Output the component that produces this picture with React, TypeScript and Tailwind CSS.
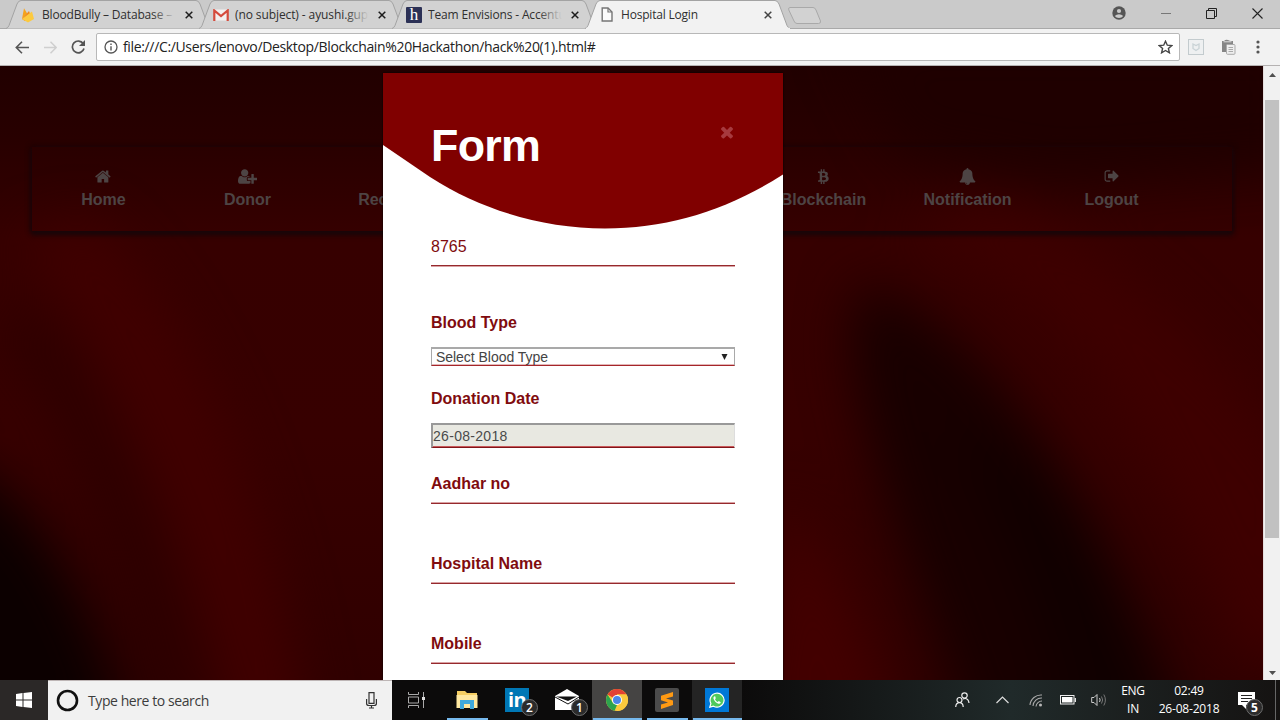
import type { ReactNode } from "react";

const ui = "font-['Open_Sans','Noto_Sans',sans-serif]";

/* ---------- Browser chrome ---------- */

function TabShape({ active }: { active?: boolean }) {
  return (
    <svg className="absolute inset-0" width="206" height="29" viewBox="0 0 206 29">
      <path
        d="M0 28.5 Q2 28 3 25.5 L11 4 Q12.5 0.5 15 0.5 H190 Q192.500 0.5 194 4 L202 25.5 Q203 28 205.500 28.500"
        fill={active ? "#f2f2f2" : "#d2d2d2"}
        stroke="#a3a3a3"
        strokeWidth="1"
      />
      {active && <path d="M1 28.500H205" stroke="#f2f2f2" strokeWidth="1.4" />}
    </svg>
  );
}

function Tab({
  icon,
  title,
  titleClass,
  active,
  fade,
}: {
  icon: ReactNode;
  title: string;
  titleClass: string;
  active?: boolean;
  fade?: boolean;
}) {
  return (
    <div className={`relative -mr-[13px] h-[29px] w-[206px] shrink-0 ${active ? "z-10" : ""}`}>
      <TabShape active={active} />
      <div className="relative flex h-[29px] items-center pl-[14px]">
        <div className="flex w-4 justify-center">{icon}</div>
        <div className={`relative ml-[6px] w-[134px] overflow-hidden whitespace-nowrap text-[12px] text-[#2f2f2f] ${titleClass}`}>
          {title}
          {fade && <div className="absolute inset-y-0 right-0 w-6 bg-linear-to-r from-[#d2d2d200] to-[#d2d2d2]" />}
        </div>
        <svg className="ml-[9px]" width="8" height="8" viewBox="0 0 8 8">
          <path d="M0.700 0.700L7.300 7.300M7.300 0.700L0.700 7.300" stroke={active ? "#444" : "#1c1c1c"} strokeWidth="1.500" />
        </svg>
      </div>
    </div>
  );
}

function FirebaseIcon() {
  return (
    <svg width="14" height="16" viewBox="0 0 14 16">
      <path d="M1 12L3 1.300L6.200 6.500Z" fill="#f5a31c" />
      <path d="M1 12L8 4L9.500 8L4 14Z" fill="#f08a1d" />
      <path d="M1 12L11 4.500L13 12L7 15.500Z" fill="#fcca3f" />
    </svg>
  );
}

function GmailIcon() {
  return (
    <svg width="16" height="12" viewBox="0 0 16 12">
      <rect x="1" y="0.500" width="14" height="11" fill="#f3f0ef" />
      <path d="M1.300 12V1.500L8 7L14.700 1.500V12" fill="none" stroke="#d54b3d" strokeWidth="2.200" />
    </svg>
  );
}

function PageIcon() {
  return (
    <svg width="12" height="15" viewBox="0 0 12 15">
      <path d="M1.200 1H7L11 5V14H1.200Z" fill="#fafafa" stroke="#757575" strokeWidth="1.400" />
      <path d="M7 1V5H11" fill="none" stroke="#757575" strokeWidth="1.200" />
    </svg>
  );
}

function TabStrip() {
  return (
    <div className="relative z-10 flex h-[29px] shrink-0 bg-[#cacaca] pl-[6px] shadow-[inset_0_-1px_0_#a9a9a9]">
      <Tab icon={<FirebaseIcon />} title="BloodBully – Database – F" titleClass="tracking-[-0.170px]" fade />
      <Tab icon={<GmailIcon />} title="(no subject) - ayushi.gupt" titleClass="tracking-[-0.100px]" fade />
      <Tab
        icon={
          <div className="flex h-4 w-4 items-center justify-center rounded-[1px] bg-[#2c3156] font-['Liberation_Serif',serif] text-[17px] leading-none text-white">
            h
          </div>
        }
        title="Team Envisions - Accentu"
        titleClass="tracking-[-0.150px]"
        fade
      />
      <Tab icon={<PageIcon />} title="Hospital Login" titleClass="tracking-[-0.200px]" active />
      <svg className="mt-[7px] ml-[9px]" width="36" height="18" viewBox="0 0 36 18">
        <path d="M3 0.500H26Q28 0.500 29 3L33.500 14Q34 16.500 31.500 16.500H10Q8 16.500 7 14L1.800 3Q1 0.500 3 0.500Z" fill="#d2d2d2" stroke="#a9a9a9" />
      </svg>
      <div className="ml-auto flex h-[27px] items-center pr-[17px]">
        <svg className="mt-[-2px]" width="14" height="14" viewBox="0 0 14 14">
          <circle cx="7" cy="7" r="6.700" fill="#555" />
          <circle cx="7" cy="5" r="2.100" fill="#cacaca" />
          <path d="M2.800 9.900Q4.500 8.200 7 8.200T11.200 9.900Q9.800 12 7 12T2.800 9.900Z" fill="#cacaca" />
        </svg>
        <svg className="ml-[35px]" width="10" height="10" viewBox="0 0 10 10">
          <path d="M0 4.500H10" stroke="#777" />
        </svg>
        <svg className="ml-[35px]" width="11" height="11" viewBox="0 0 11 11">
          <path d="M0.500 2.500H8.500V10.500H0.500ZM2.500 2.500V0.500H10.500V8.500H8.500" fill="none" stroke="#222" />
        </svg>
        <svg className="ml-[35px]" width="11" height="11" viewBox="0 0 11 11">
          <path d="M0.500 0.500L10.500 10.500M10.500 0.500L0.500 10.500" stroke="#222" strokeWidth="1.100" />
        </svg>
      </div>
    </div>
  );
}

function Toolbar() {
  return (
    <div className="flex h-[37px] shrink-0 items-center border-b border-[#b5b2b2] bg-[#f2f2f2] pl-[15px]">
      <svg width="14" height="13" viewBox="0 0 14 13">
        <path d="M14 6.500H1.500M7 0.800L1.300 6.500L7 12.200" fill="none" stroke="#555" strokeWidth="1.600" />
      </svg>
      <svg className="ml-[15px]" width="13" height="13" viewBox="0 0 13 13">
        <path d="M0 6.500H12M6.500 0.800L12.200 6.500L6.500 12.200" fill="none" stroke="#cfcfcf" strokeWidth="1.500" />
      </svg>
      <svg className="ml-[14px]" width="15" height="14" viewBox="0 0 15 14">
        <path d="M12.200 3.600A5.900 5.900 0 1 0 13 8.500" fill="none" stroke="#555" strokeWidth="1.700" />
        <path d="M14 0V6H8Z" fill="#555" />
      </svg>
      <div className="ml-[10px] flex h-[28px] w-[1084px] items-center rounded-[2px] border border-[#b8b8b8] bg-white pl-[7px]">
        <svg width="14" height="14" viewBox="0 0 14 14">
          <circle cx="7" cy="7" r="6" fill="none" stroke="#555" strokeWidth="1.300" />
          <path d="M7 6.200V10.500M7 3.500V5" stroke="#555" strokeWidth="1.400" />
        </svg>
        <div className="ml-[5px] flex-1 text-[14px] leading-[20px] tracking-[-0.350px] whitespace-nowrap text-[#222]">
          file:///C:/Users/lenovo/Desktop/Blockchain%20Hackathon/hack%20(1).html#
        </div>
        <svg className="mr-[6px]" width="15" height="14" viewBox="0 0 15 14">
          <path d="M7.500 1.200L9.300 5.200L13.700 5.600L10.400 8.500L11.400 12.800L7.500 10.500L3.600 12.800L4.600 8.500L1.300 5.600L5.700 5.200Z" fill="none" stroke="#444" strokeWidth="1.400" />
        </svg>
      </div>
      <svg className="ml-[8px]" width="16" height="16" viewBox="0 0 16 16">
        <rect x="0.500" y="0.500" width="15" height="15" fill="#eef0f1" stroke="#c3cbce" />
        <path d="M5 5L8 6.500L11 5V9.500L8 11.500L5 9.500Z" fill="none" stroke="#c9d3d6" strokeWidth="1.300" />
      </svg>
      <svg className="ml-[17px]" width="15" height="16" viewBox="0 0 15 16">
        <path d="M1 2H3Q5 0 7 1T10 2H12V6H6V13H1Z" fill="#858585" />
        <path d="M2.500 2.800H10.500" stroke="#ddd" />
        <rect x="5.500" y="5.500" width="8.500" height="9.800" rx="1" fill="#eee" stroke="#aaa" />
        <path d="M7.500 8.500H12M7.500 10.500H12M7.500 12.500H12" stroke="#aaa" />
      </svg>
      <svg className="ml-[20px]" width="4" height="14" viewBox="0 0 4 14">
        <circle cx="2" cy="2" r="1.600" fill="#555" />
        <circle cx="2" cy="7" r="1.600" fill="#555" />
        <circle cx="2" cy="12" r="1.600" fill="#555" />
      </svg>
    </div>
  );
}

/* ---------- Page ---------- */

const iconPaths = {
  home: "M1408 992v480q0 26-19 45t-45 19h-384v-384h-256v384h-384q-26 0-45-19t-19-45v-480q0-1 .5-3t.5-3l575-474 575 474q1 2 1 6zm223-69l-62 74q-8 9-21 11h-3q-13 0-21-7l-692-577-692 577q-12 8-24 7-13-2-21-11l-62-74q-8-10-7-23.5t11-21.5l719-599q32-26 76-26t76 26l244 204v-195q0-14 9-23t23-9h192q14 0 23 9t9 23v408l219 182q10 8 11 21.5t-7 23.5z",
  userPlus:
    "M704 896q-159 0-271.5-112.5t-112.5-271.5 112.5-271.5 271.5-112.5 271.5 112.5 112.5 271.5-112.5 271.5-271.5 112.5zm960 128h352q13 0 22.5 9.5t9.5 22.5v192q0 13-9.5 22.5t-22.5 9.5h-352v352q0 13-9.5 22.5t-22.5 9.5h-192q-13 0-22.5-9.5t-9.5-22.5v-352h-352q-13 0-22.5-9.5t-9.5-22.5v-192q0-13 9.5-22.5t22.5-9.5h352v-352q0-13 9.5-22.5t22.5-9.5h192q13 0 22.5 9.5t9.5 22.5v352zm-736 224q0 52 38 90t90 38h256v238q-68 50-171 50h-874q-121 0-194-69t-73-190q0-53 3.5-103.5t14-109 26.5-108.5 43-97.5 62-81 85.5-53.5 111.5-20q19 0 39 17 79 61 154.5 91.5t164.5 30.5 164.5-30.5 154.5-91.5q20-17 39-17 132 0 217 96h-223q-52 0-90 38t-38 90v192z",
  btc: "M1217 651q18 182-131 258 117 28 175 103t45 214q-7 71-32.5 125t-64.5 89-97 58.5-121.5 34.5-145.5 15v255h-154v-251q-80 0-122-1v252h-154v-255q-18 0-54-.5t-55-.5h-200l31-183h111q50 0 58-51v-402h16q-6-1-16-1v-287q-13-68-89-68h-111v-164l212 1q64 0 97-1v-252h154v247q82-2 122-2v-245h154v252q79 7 140 22.5t113 45 82.5 78 36.5 114.5zm-215 545q0-36-15-64t-37-46-57.5-30.5-65.5-18.5-74-9-69-3-64.5 1-47.5 1v338q8 0 37 .5t48 .5 53-1.5 58.5-4 57-8.5 55.5-14 47.5-21 39.5-30 24.5-40 9.5-51zm-71-476q0-33-12.5-58.5t-30.5-42-48-28-55-16.5-61.5-8-58-2.5-54 1-39.5.5v307q5 0 34.500.5t46.500 0 50-2 55-5.500 51.500-11 48.500-18.500 37-27 27-38.500 9-51z",
  bell: "M912 1696q0-16-16-16-59 0-101.5-42.5t-42.5-101.5q0-16-16-16t-16 16q0 73 51.5 124.5t124.5 51.5q16 0 16-16zm816-288q0 52-38 90t-90 38h-448q0 106-75 181t-181 75-181-75-75-181h-448q-52 0-90-38t-38-90q50-42 91-88t85-119.5 74.5-158.5 50-206 19.5-260q0-152 117-282.5t307-158.5q-8-19-8-39 0-40 28-68t68-28 68 28 28 68q0 20-8 39 190 28 307 158.5t117 282.5q0 139 19.5 260t50 206 74.5 158.5 85 119.5 91 88z",
  signOut:
    "M704 1440q0 4 1 20t.5 26.5-3 23.5-10 19.5-20.5 6.5h-320q-119 0-203.5-84.5t-84.5-203.5v-704q0-119 84.5-203.5t203.5-84.5h320q13 0 22.5 9.5t9.5 22.5q0 4 1 20t.5 26.5-3 23.5-10 19.5-20.5 6.5h-320q-66 0-113 47t-47 113v704q0 66 47 113t113 47h312l11.5 1 11.5 3 8 5.5 7 9 2 13.5zm928-544q0 26-19 45l-544 544q-19 19-45 19t-45-19-19-45v-288h-448q-26 0-45-19t-19-45v-384q0-26 19-45t45-19h448v-288q0-26 19-45t45-19 45 19l544 544q19 19 19 45z",
  times:
    "M1490 1322q0 40-28 68l-136 136q-28 28-68 28t-68-28l-294-294-294 294q-28 28-68 28t-68-28l-136-136q-28-28-28-68t28-68l294-294-294-294q-28-28-28-68t28-68l136-136q28-28 68-28t68 28l294 294 294-294q28-28 68-28t68 28l136 136q28 28 28 68t-28 68l-294 294 294 294q28 28 28 68z",
};

function Glyph({ d, size, width = 1792 }: { d: string; size: number; width?: number }) {
  return (
    <svg width={(size * width) / 1792} height={size} viewBox={`0 0 ${width} 1792`} fill="currentColor">
      <path d={d} />
    </svg>
  );
}

function NavItem({ icon, label }: { icon?: ReactNode; label?: string }) {
  return (
    <div className="flex w-[144px] shrink-0 flex-col items-center pt-[21px] text-[16px] leading-[20px] font-bold whitespace-nowrap">
      <div className="flex h-4 items-center">{icon}</div>
      <div className="mt-[6px]">{label}</div>
    </div>
  );
}

function Backdrop() {
  return (
    <svg className="absolute inset-0" width="1263" height="614" viewBox="0 66 1263 614" preserveAspectRatio="none">
      <defs>
        <linearGradient id="base" x1="0" y1="0" x2="0" y2="1">
          <stop offset="0" stopColor="#210000" />
          <stop offset="0.120" stopColor="#280000" />
          <stop offset="0.280" stopColor="#360000" />
          <stop offset="0.600" stopColor="#370000" />
          <stop offset="1" stopColor="#300000" />
        </linearGradient>
        <filter id="soft" x="-50%" y="-50%" width="200%" height="200%" colorInterpolationFilters="sRGB">
          <feGaussianBlur stdDeviation="26" />
        </filter>
      </defs>
      <rect y="66" width="1263" height="614" fill="url(#base)" />
      <g filter="url(#soft)">
        <path d="M-60 450C30 490 90 590 130 740H-80Z" fill="#0c0000" />
        <path d="M20 240C70 300 180 480 230 740H310C270 500 200 320 90 220Z" fill="#400000" />
        <path d="M0 330C60 380 130 540 165 720H205C170 540 100 380 30 310Z" fill="#2a0000" />
        <path d="M840 30H1300V160L1060 180L900 150Z" fill="#1f0000" />
        <path d="M860 280C960 320 1080 430 1190 740H970C930 600 870 500 850 340Z" fill="#180000" />
        <path d="M960 430C1030 440 1120 560 1170 740H1070C1050 620 1000 520 960 430Z" fill="#100000" />
        <path d="M900 230C1020 260 1130 360 1240 660H1310V480C1200 330 1100 230 980 205Z" fill="#3e0000" />
        <path d="M783 500C830 550 870 620 900 740H750Z" fill="#430000" />
      </g>
    </svg>
  );
}

function Field({ label }: { label: string }) {
  return (
    <div className="mb-[40px] h-[40px] border-b border-[#96292d] pt-[10px] leading-[20px] font-bold shadow-[inset_0_-1px_0_#d9a2a4]">
      {label}
    </div>
  );
}

function FormModal() {
  return (
    <div className="absolute top-[7px] left-[383px] h-[607px] w-[400px] overflow-hidden bg-white px-[48px] font-['Liberation_Sans',Arial,sans-serif] text-[16px] text-[#800b0e] shadow-[0_0_2px_#000]">
      <svg className="absolute top-0 left-0" width="400" height="156" viewBox="0 0 400 156">
        <path d="M0 0H400V101.500C345 137 285 155.500 222 155.500C160 155.500 98 137 47 104L0 72Z" fill="#800000" />
      </svg>
      <div className="relative flex h-[163px] items-start justify-between">
        <h1 className="mt-[45px] text-[44.8px] leading-[54px] font-bold tracking-[-0.700px] text-white">Form</h1>
        <div className="mt-[50px] -mr-[1px] text-[#a63a3e]">
          <Glyph d={iconPaths.times} size={18} />
        </div>
      </div>
      <div className="h-[31px] border-b border-[#d9a2a4] leading-[22px] shadow-[inset_0_-1px_0_#96292d]">8765</div>
      <div className="mt-[46px] leading-[20px] font-bold">Blood Type</div>
      <div className="mt-[14px] flex h-[19px] items-center justify-between border border-t-2 border-[#a9a9a9] border-b-[#a5262a] pr-[6px] pl-[4px] text-[14px] text-[#444] shadow-[inset_0_-1px_0_#e3b6b7]">
        <span className="-mt-[1px] leading-[16px] tracking-[-0.040px]">Select Blood Type</span>
        <svg width="7" height="6" viewBox="0 0 7 6">
          <path d="M0.500 0H6.500L3.500 6Z" fill="#222" />
        </svg>
      </div>
      <div className="mt-[23px] leading-[20px] font-bold">Donation Date</div>
      <div className="mt-[14px] h-[25px] border-t-2 border-r border-b border-l-2 border-t-[#999] border-r-[#ddd] border-b-[#801418] border-l-[#999] bg-[#e8e8e1] text-[14px] leading-[22px] tracking-[0.300px] text-[#4a4a4a] shadow-[inset_0_-1px_0_#c9585a]">
        26-08-2018
      </div>
      <div className="mt-[16px]">
        <Field label="Aadhar no" />
        <Field label="Hospital Name" />
        <Field label="Mobile" />
      </div>
    </div>
  );
}

function Page() {
  return (
    <div className="flex h-[614px] shrink-0">
      <div className="relative h-[614px] w-[1263px] overflow-hidden">
        <Backdrop />
        <div className="relative mt-[81px] ml-[31.5px] flex h-[84px] w-[1200px] font-['Liberation_Sans',Arial,sans-serif] text-[#4d4444] shadow-[0_3px_5px_1px_#180609,0_0_5px_1px_#1c0407]">
          <NavItem icon={<Glyph d={iconPaths.home} size={17} />} label="Home" />
          <NavItem icon={<Glyph d={iconPaths.userPlus} size={17} width={2048} />} label="Donor" />
          <NavItem label="Receiver" />
          <NavItem />
          <NavItem />
          <NavItem icon={<Glyph d={iconPaths.btc} size={16} width={1536} />} label="Blockchain" />
          <NavItem icon={<Glyph d={iconPaths.bell} size={17} />} label="Notification" />
          <NavItem icon={<Glyph d={iconPaths.signOut} size={16} />} label="Logout" />
        </div>
        <FormModal />
      </div>
      <div className="flex w-[17px] flex-col items-center border-l border-[#e4dede] bg-[#f1f1f1]">
        <svg className="mt-[7px]" width="7" height="4" viewBox="0 0 7 4">
          <path d="M0 4L3.500 0L7 4Z" fill="#505050" />
        </svg>
        <div className="mt-[23px] h-[438px] w-[14px] bg-[#c1c1c1]" />
        <svg className="mt-auto mb-[5px]" width="7" height="4" viewBox="0 0 7 4">
          <path d="M0 0L3.500 4L7 0Z" fill="#505050" />
        </svg>
      </div>
    </div>
  );
}

/* ---------- Taskbar ---------- */

function Badge({ children }: { children: ReactNode }) {
  return (
    <div className="absolute top-[19px] left-[29px] flex h-[17px] w-[17px] items-center justify-center rounded-full border border-[#6c6c6c] bg-[#2b2b2b] text-[12px] leading-none font-semibold text-white">
      {children}
    </div>
  );
}

function TaskButton({ children, className = "", bar = "" }: { children: ReactNode; className?: string; bar?: string }) {
  return (
    <div className={`relative flex h-10 w-[50px] shrink-0 items-center justify-center ${className}`}>
      {children}
      {bar && <div className={`absolute bottom-0 h-[2px] bg-[#76b9ed] ${bar}`} />}
    </div>
  );
}

function Taskbar() {
  return (
    <div className="flex h-10 shrink-0 bg-[#0c0b0b] text-white">
      <div className="flex w-12 shrink-0 items-center justify-center bg-[#2b2827]">
        <svg width="16" height="16" viewBox="0 0 16 16" fill="#fff">
          <path d="M0 2L6.500 1.100V7.500H0ZM7.500 1L16 0V7.500H7.500ZM0 8.500H6.500V14.900L0 14ZM7.500 8.500H16V16L7.500 15Z" />
        </svg>
      </div>
      <div className="flex w-[344px] shrink-0 items-center border-t border-[#bdb5b5] bg-[#f1f1f1] pl-[8px]">
        <svg width="23" height="23" viewBox="0 0 23 23">
          <circle cx="11.500" cy="11.500" r="9.500" fill="none" stroke="#111" strokeWidth="2.600" />
        </svg>
        <div className="ml-[9px] text-[14px] tracking-[-0.420px] text-[#3c3c3c]">Type here to search</div>
        <svg className="mr-[15px] ml-auto" width="11" height="17" viewBox="0 0 11 17">
          <path d="M3 0.700H8V11.300H3ZM0.600 7V11.500Q0.600 13.500 3 13.500H8Q10.400 13.500 10.400 11.500V7M5.500 13.500V16M3 16H8" fill="none" stroke="#333" strokeWidth="1.200" />
        </svg>
      </div>
      <TaskButton>
        <svg className="-ml-[1px]" width="17" height="16" viewBox="0 0 17 16">
          <path d="M0.500 0V2.500H10.500V0M0.500 16V13.500H10.500V16M0.500 5H10.500V11H0.500ZM15.500 0V16" fill="none" stroke="#aaa" />
          <path d="M14 5H17V8H14Z" fill="#ddd" />
        </svg>
      </TaskButton>
      <TaskButton bar="left-[5px] w-[41px]">
        <svg width="22" height="18" viewBox="0 0 22 18">
          <path d="M1 0H9L11 2H21V16H1Z" fill="#f5ce63" />
          <path d="M0.500 4H21.500V17H0.500Z" fill="#ffe8a0" />
          <path d="M4 18V9H18V18H14V13H8V18Z" fill="#3fa9dc" />
        </svg>
      </TaskButton>
      <TaskButton>
        <div className="flex h-6 w-6 items-center justify-center bg-[#0077b5] font-['Open_Sans',sans-serif] text-[20px] leading-none font-bold tracking-[-0.500px]">
          in
        </div>
        <Badge>2</Badge>
      </TaskButton>
      <TaskButton>
        <svg width="24" height="22" viewBox="0 0 24 22">
          <path d="M0 7L12 0L24 7V21H0Z" fill="#fff" />
          <path d="M1 7.500H22L13 12Z" fill="#111" />
          <path d="M0 8L13 15L24 8" fill="none" stroke="#111" strokeWidth="1" />
        </svg>
        <Badge>1</Badge>
      </TaskButton>
      <TaskButton className="bg-[#454443]" bar="left-[1px] w-[49px]">
        <svg width="22" height="22" viewBox="0 0 22 22">
          <circle cx="11" cy="11" r="11" fill="#fbc93d" />
          <path d="M11 11L1.500 5.500A11 11 0 0 1 20.500 5.500H11Z" fill="#e34133" />
          <path d="M1.500 5.500L6.700 13.500L11 16L8.600 21.700A11 11 0 0 1 1.500 5.500Z" fill="#2da44e" />
          <path d="M20.500 5.500H11V11L15.300 13.500L10.500 22A11 11 0 0 0 20.500 5.500Z" fill="#fbc93d" />
          <circle cx="11" cy="11" r="5" fill="#fff" />
          <circle cx="11" cy="11" r="4" fill="#4a86e8" />
        </svg>
      </TaskButton>
      <TaskButton bar="left-[5px] w-[41px]">
        <div className="flex h-6 w-6 items-center justify-center rounded-[2px] bg-[#4b4b4b]">
          <svg width="14" height="17" viewBox="0 0 14 17">
            <path d="M13 0V4.500L6 6.500L13 8.500V13L1 17V12.500L8 10.400L1 8.200V3.800Z" fill="#ff9a13" />
          </svg>
        </div>
      </TaskButton>
      <TaskButton className="bg-[#242424]" bar="left-[1px] w-[49px]">
        <div className="flex h-6 w-6 items-center justify-center bg-[#0078d7]">
          <svg width="16" height="16" viewBox="0 0 16 16">
            <path d="M0.800 15.200L1.900 11.500A7 7 0 1 1 4.500 14.200Z" fill="#4fca5c" stroke="#fff" strokeWidth="1.200" />
            <path d="M5.500 4.200Q4 5 4.500 6.800Q6 10.800 9.500 11.700Q11.200 12 11.800 10.200L9.800 9L8.700 10Q6.800 9.200 6 7.300L6.800 6.300L6.200 4.200Z" fill="#fff" />
          </svg>
        </div>
      </TaskButton>
      <div className="flex flex-1 items-center bg-linear-to-r from-[#0c0b0b] via-[#202a2a] to-[#151312] pl-[213px]">
        <svg className="shrink-0" width="15" height="16" viewBox="0 0 15 16" fill="none" stroke="#eee" strokeWidth="1.200">
          <circle cx="9.500" cy="3.500" r="2.700" />
          <circle cx="4.500" cy="8" r="2.500" />
          <path d="M0.700 15Q1 10.700 4.500 10.700T8.200 15M8 7Q9 6.400 10.500 6.500Q13.500 7 14 11" />
        </svg>
        <svg className="ml-[26px]" width="13" height="8" viewBox="0 0 13 8">
          <path d="M0.500 7L6.500 1L12.500 7" fill="none" stroke="#ddd" strokeWidth="1.200" />
        </svg>
        <svg className="ml-[20px]" width="14" height="14" viewBox="0 0 14 14" fill="none" stroke="#aaa" strokeWidth="1.100">
          <path d="M1 12A11 11 0 0 1 13 2M4 13A8.500 8.500 0 0 1 13 5M7 13.500A6 6 0 0 1 13 8" />
          <circle cx="11.500" cy="12" r="1" fill="#eee" />
        </svg>
        <svg className="ml-[17px]" width="16" height="10" viewBox="0 0 16 10">
          <rect x="0.500" y="0.500" width="13.500" height="8.500" fill="none" stroke="#eee" />
          <rect x="2" y="2" width="10.500" height="5.500" fill="#fff" />
          <path d="M15.300 3V7" stroke="#eee" strokeWidth="1.300" />
        </svg>
        <svg className="ml-[15px]" width="16" height="14" viewBox="0 0 16 14" fill="none" stroke="#ccc">
          <path d="M0.700 4.500H3L6 1.500V12.500L3 9.500H0.700ZM8.500 5Q9.800 7 8.500 9" />
          <path d="M10.500 3.500Q12.800 7 10.500 10.500M12.800 1.500Q16 7 12.800 12.500" stroke="#777" />
        </svg>
        <div className="ml-[9px] w-[34px] text-center text-[12px] leading-[18px] tracking-[-0.300px]">
          <div>ENG</div>
          <div>IN</div>
        </div>
        <div className="ml-[4px] w-[70px] text-center text-[12px] leading-[18px] tracking-[-0.200px] whitespace-nowrap">
          <div>02:49</div>
          <div>26-08-2018</div>
        </div>
        <div className="relative ml-[9px] h-10 w-[40px]">
          <svg className="mt-[12px] ml-[5px]" width="17" height="17" viewBox="0 0 17 17">
            <path d="M0 0H17V13H8V17L4 13H0Z" fill="#fff" />
            <path d="M3 3.500H14M3 6.500H14M3 9.500H10" stroke="#222" strokeWidth="1.100" />
          </svg>
          <div className="absolute top-[19px] left-[13px] flex h-[17px] w-[17px] items-center justify-center rounded-full border border-[#6c6c6c] bg-[#2b2b2b] text-[12px] leading-none font-bold">
            5
          </div>
        </div>
        <div className="ml-auto h-10 w-[5px] border-l border-[#666]" />
      </div>
    </div>
  );
}

export default function App() {
  return (
    <div className={`flex h-[720px] w-[1280px] flex-col overflow-hidden ${ui}`}>
      <TabStrip />
      <Toolbar />
      <Page />
      <Taskbar />
    </div>
  );
}
